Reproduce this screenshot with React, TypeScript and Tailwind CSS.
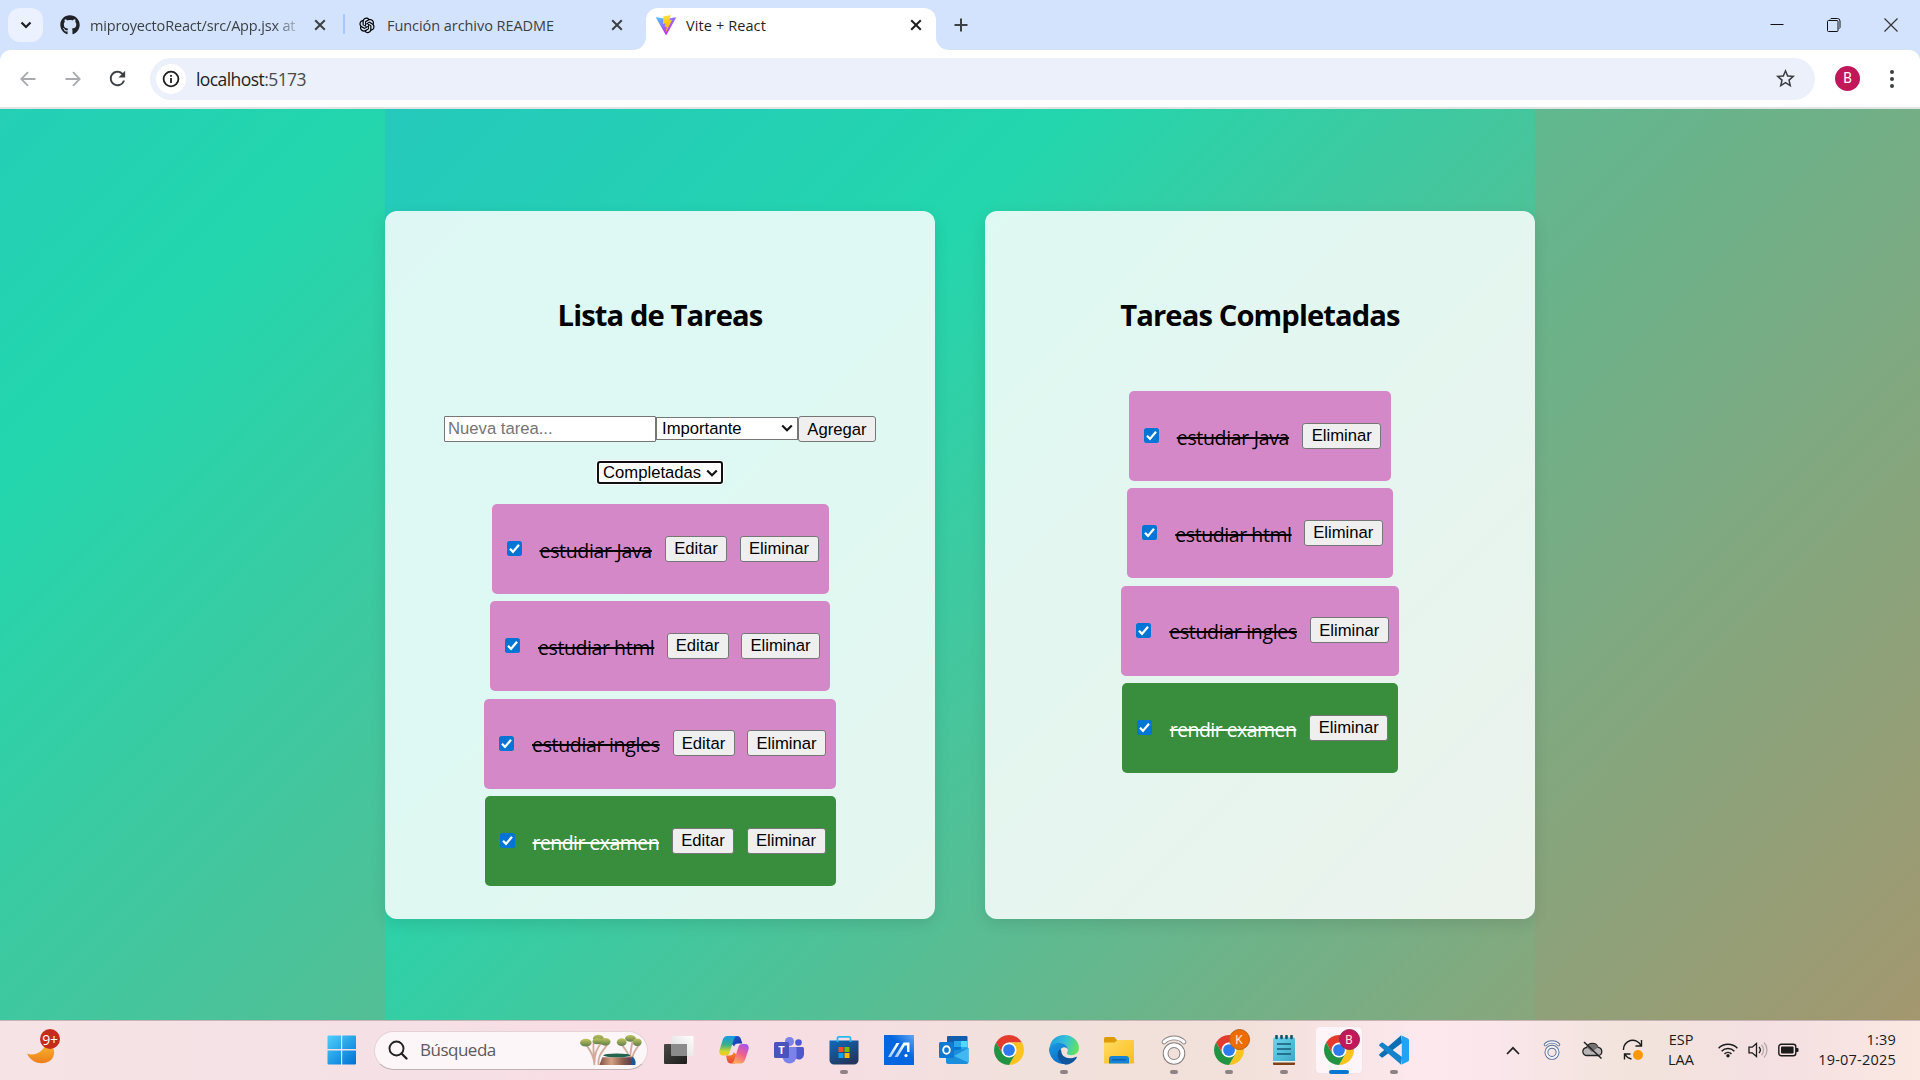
import React from "react";
import { FaGithub } from "react-icons/fa";
import { AiOutlineOpenAI } from "react-icons/ai";
import { MdStarOutline, MdRefresh } from "react-icons/md";

type Kind = "pink" | "green";
interface Task {
  name: string;
  kind: Kind;
  width: string;
}

const tasks: Task[] = [
  { name: "estudiar Java", kind: "pink", width: "w-[113px] tracking-[-0.32px]" },
  { name: "estudiar html", kind: "pink", width: "w-[116px] tracking-[-0.42px]" },
  { name: "estudiar ingles", kind: "pink", width: "w-[128px] tracking-[-0.32px]" },
  { name: "rendir examen", kind: "green", width: "w-[127px] tracking-[-0.55px]" },
];

const CloseIcon = ({ dark = false }: { dark?: boolean }) => (
  <svg width="12" height="12" viewBox="0 0 12 12" className="shrink-0">
    <path d="M1.2 1.2 10.8 10.8M10.8 1.2 1.2 10.8" stroke={dark ? "#1f1f1f" : "#3c4043"} strokeWidth="2" />
  </svg>
);

const ViteLogo = () => (
  <svg width="20" height="20" viewBox="0 0 256 257">
    <defs>
      <linearGradient id="v1" x1="0" y1="0" x2="0.6" y2="0.8">
        <stop offset="0" stopColor="#41D1FF" />
        <stop offset="1" stopColor="#BD34FE" />
      </linearGradient>
      <linearGradient id="v2" x1="0.4" y1="0" x2="0.5" y2="1">
        <stop offset="0" stopColor="#FFEA83" />
        <stop offset=".1" stopColor="#FFDD35" />
        <stop offset="1" stopColor="#FFA800" />
      </linearGradient>
    </defs>
    <path fill="url(#v1)" d="M255.153 37.938L134.897 252.976c-2.483 4.44-8.862 4.466-11.382.048L.875 37.958c-2.746-4.814 1.371-10.646 6.827-9.67l120.385 21.517a6.537 6.537 0 0 0 2.322-.004l117.867-21.483c5.438-.991 9.574 4.796 6.877 9.62Z" />
    <path fill="url(#v2)" d="M185.432.063L96.44 17.501a3.268 3.268 0 0 0-2.634 3.014l-5.474 92.456a3.268 3.268 0 0 0 3.997 3.378l24.777-5.718c2.318-.535 4.413 1.507 3.936 3.838l-7.361 36.047c-.495 2.426 1.782 4.5 4.151 3.78l15.304-4.649c2.372-.72 4.652 1.36 4.15 3.788l-11.698 56.621c-.732 3.542 3.979 5.473 5.943 2.437l1.313-2.028l72.516-144.72c1.215-2.423-.88-5.186-3.54-4.672l-25.505 4.922c-2.396.462-4.435-1.77-3.759-4.114l16.646-57.705c.677-2.35-1.37-4.583-3.769-4.113Z" />
  </svg>
);

function BrowserTabs() {
  return (
    <div className="flex h-[50px] items-start bg-[#d3e3fd] pl-2 pt-2 font-['Open_Sans','Noto_Sans',sans-serif] text-[14.5px] text-[#3c4043]">
      <div className="flex h-[34px] w-[35px] items-center justify-center rounded-xl bg-[#ebf1fe]">
        <svg width="12" height="8" viewBox="0 0 12 8">
          <path d="M1.5 1.5 6 6 10.5 1.5" fill="none" stroke="#1f1f1f" strokeWidth="2.2" />
        </svg>
      </div>
      <div className="ml-[17px] flex h-[34px] w-[266px] items-center">
        <FaGithub size={20} color="#1f2328" />
        <span className="ml-[10px] mt-px w-[210px] overflow-hidden whitespace-nowrap tracking-[-0.17px] [mask-image:linear-gradient(to_right,black_184px,transparent_214px)]">
          miproyectoReact/src/App.jsx at
        </span>
        <span className="ml-[14px] flex"><CloseIcon /></span>
      </div>
      <div className="ml-[17px] mt-[6px] h-5 w-[2px] bg-[#a8c7fa]" />
      <div className="ml-[12px] flex h-[34px] w-[289px] items-center">
        <AiOutlineOpenAI size={20} color="#000" />
        <span className="ml-[10px] mt-px w-[224px] whitespace-nowrap tracking-[-0.06px]">Función archivo README</span>
        <CloseIcon />
      </div>
      <svg width="13" height="42" viewBox="0 0 13 42" className="-ml-[13px]">
        <path d="M0 42 A13 13 0 0 0 13 29 V42Z" fill="#fff" />
      </svg>
      <div className="flex h-[42px] w-[290px] items-start rounded-t-[12px] bg-white pl-[10px] text-[#1f1f1f]">
        <div className="flex h-[34px] w-full items-center">
          <ViteLogo />
          <span className="ml-[10px] mt-px w-[224px] tracking-[0.1px]">Vite + React</span>
          <CloseIcon dark />
        </div>
      </div>
      <svg width="13" height="42" viewBox="0 0 13 42">
        <path d="M13 42 A13 13 0 0 1 0 29 V42Z" fill="#fff" />
      </svg>
      <svg width="14" height="34" viewBox="0 0 14 34" className="ml-[5px]">
        <path d="M7 10.5V23.5M.5 17H13.5" stroke="#3c4043" strokeWidth="2" />
      </svg>
      <div className="ml-auto mr-[22px] flex h-[34px] items-center gap-[43px]">
        <svg width="14" height="14" viewBox="0 0 14 14"><path d="M.5 6.5H13.500" stroke="#111" /></svg>
        <svg width="14" height="14" viewBox="0 0 14 14" fill="none" stroke="#111">
          <path d="M.5 3.500a1 1 0 0 1 1-1h8.500a1 1 0 0 1 1 1v9a1 1 0 0 1-1 1H1.500a1 1 0 0 1-1-1z" />
          <path d="M3 1.500 4 .5h6.500a2.500 2.500 0 0 1 2.500 2.500v6.500l-1 1.200" />
        </svg>
        <svg width="14" height="14" viewBox="0 0 14 14"><path d="M.5.5 13.500 13.500M13.500.5.5 13.500" stroke="#333" strokeWidth="1.200" /></svg>
      </div>
    </div>
  );
}

function AddressBar() {
  return (
    <div className="h-[59px] bg-[#d3e3fd] font-['Open_Sans','Noto_Sans',sans-serif]">
      <div className="flex h-[59px] items-center rounded-t-[11px] border-b-2 border-[#dfe3e1] bg-white">
        <svg width="16" height="16" viewBox="0 0 16 16" className="ml-5" fill="none" stroke="#a9abae" strokeWidth="1.800">
          <path d="M15.500 8H1.500M8 1.200 1.300 8 8 14.800" />
        </svg>
        <svg width="16" height="16" viewBox="0 0 16 16" className="ml-[29px]" fill="none" stroke="#a9abae" strokeWidth="1.800">
          <path d="M.5 8H14.500M8 1.200 14.700 8 8 14.800" />
        </svg>
        <MdRefresh size={23} color="#3c4043" className="ml-[25px]" />
        <div className="ml-[21px] flex h-[42px] w-[1665px] items-center rounded-full bg-[#ecf0fa] pl-[6px] pr-[18px]">
          <div className="flex h-[30px] w-[30px] items-center justify-center rounded-full bg-white">
            <svg width="18" height="18" viewBox="0 0 18 18" fill="none" stroke="#1f1f1f">
              <circle cx="9" cy="9" r="7.400" strokeWidth="1.800" />
              <path d="M9 8v5M9 5v1.800" strokeWidth="1.800" />
            </svg>
          </div>
          <span className="ml-[10px] mt-px text-[17.500px] tracking-[-0.570px] text-[#1f1f1f]">
            localhost<span className="text-[#474b4f]">:5173</span>
          </span>
          <MdStarOutline size={23} color="#3c4043" className="ml-auto" />
        </div>
        <div className="ml-5 flex h-[25px] w-[25px] items-center justify-center rounded-full bg-[#c2185b] font-['Roboto',sans-serif] text-[14px] text-white">B</div>
        <div className="ml-[30px] flex flex-col gap-[3px]">
          <i className="h-1 w-1 rounded-full bg-[#3c4043]" />
          <i className="h-1 w-1 rounded-full bg-[#3c4043]" />
          <i className="h-1 w-1 rounded-full bg-[#3c4043]" />
        </div>
      </div>
    </div>
  );
}

const FormButton = ({ children, className }: { children: React.ReactNode; className: string }) => (
  <button
    className={
      "h-[26px] shrink-0 rounded-[3px] border border-[#767676] bg-[#efefef] text-center font-['Liberation_Sans',Arial,sans-serif] text-[16.67px] leading-[23px] text-black " +
      className
    }
  >
    {children}
  </button>
);

const SelectArrow = () => (
  <svg width="12" height="8" viewBox="0 0 12 8" className="ml-auto shrink-0">
    <path d="M1.200 1.500 6 6.200 10.800 1.500" fill="none" stroke="#111" strokeWidth="2.100" />
  </svg>
);

function TaskRow({ task, editable }: { task: Task; editable: boolean }) {
  const green = task.kind === "green";
  return (
    <li className={"flex h-[90px] items-center rounded-[5px] pb-px pl-[15px] pr-[10px] " + (green ? "bg-[#388e3c] text-white" : "bg-[#d588c8] text-black")}>
      <svg width="15" height="15" viewBox="0 0 15 15" className="shrink-0">
        <rect width="15" height="15" rx="2.500" fill="#0075d5" />
        <path d="M3 7.800 6 10.900 12 3.800" fill="none" stroke="#fff" strokeWidth="2.300" />
      </svg>
      <span className={"ml-[18px] mr-[12.500px] mt-[3px] shrink-0 whitespace-nowrap font-['Open_Sans','Noto_Sans',sans-serif] text-[19.500px] leading-[27px] line-through decoration-2 " + task.width}>
        {task.name}
      </span>
      {editable && <FormButton className="mr-[12.500px] w-[62px]">Editar</FormButton>}
      <FormButton className="w-[79px]">Eliminar</FormButton>
    </li>
  );
}

const Heading = ({ children }: { children: React.ReactNode }) => (
  <h2 className="whitespace-nowrap font-['Open_Sans','Noto_Sans',sans-serif] text-[29.200px] font-bold leading-10 tracking-[-0.900px] text-black">{children}</h2>
);

const cardClass =
  "flex h-[708px] w-[550px] flex-col items-center rounded-[12px] bg-white/85 pt-[84px] shadow-[0_5px_15px_rgba(0,0,0,0.1)]";

function PageContent() {
  return (
    <main className="flex h-[911px] justify-center bg-[linear-gradient(135deg,#24cfb6_0%,#23d6ad_13.1%,#a3976f_100%)]">
      <div className="flex w-[1150px] gap-[50px] bg-[linear-gradient(135deg,#25c9bc_0%,#23d6ad_33.3%,#89a67c_100%)] pt-[102px]">
        <section className={cardClass}>
          <Heading>Lista de Tareas</Heading>
          <div className="mt-[81px] flex items-center font-['Liberation_Sans',Arial,sans-serif] text-[16.670px] leading-[21px]">
            <input
              placeholder="Nueva tarea..."
              className="h-[26px] w-[212px] rounded-[1px] border border-[#767676] bg-white px-[3px] pb-px text-[16.670px] placeholder:text-[#757575]"
            />
            <div className="mb-[2px] flex h-[23px] w-[142px] items-center border border-[#767676] bg-white pl-[5px] pr-1">
              Importante
              <SelectArrow />
            </div>
            <FormButton className="w-[78px]">Agregar</FormButton>
          </div>
          <div className="mt-[19px] flex h-[23px] w-[126px] items-center rounded-[3px] border-2 border-[#101010] bg-white pl-1 pr-[3px] font-['Liberation_Sans',Arial,sans-serif] text-[16.670px] shadow-[0_0_0_1px_#fff]">
            Completadas
            <SelectArrow />
          </div>
          <ul className="mt-5 flex flex-col items-center gap-[7.400px]">
            {tasks.map((t) => <TaskRow key={t.name} task={t} editable />)}
          </ul>
        </section>
        <section className={cardClass}>
          <Heading>Tareas Completadas</Heading>
          <ul className="mt-14 flex flex-col items-center gap-[7.400px]">
            {tasks.map((t) => <TaskRow key={t.name} task={t} editable={false} />)}
          </ul>
        </section>
      </div>
    </main>
  );
}

const TaskViewIcon = () => (
  <svg width="30" height="30" viewBox="0 0 30 30">
    <defs>
      <linearGradient id="tvd" x1="0" y1="0" x2="1" y2="1"><stop stopColor="#4a4a48" /><stop offset="1" stopColor="#1c1c1a" /></linearGradient>
      <linearGradient id="tvl" x1="0" y1="1" x2="1" y2="0"><stop stopColor="#d8d8d8" /><stop offset="1" stopColor="#fff" /></linearGradient>
    </defs>
    <rect x="0" y="9" width="23" height="20" rx="1" fill="url(#tvd)" />
    <rect x="7.500" y="1" width="22" height="20" rx="1" fill="url(#tvl)" />
    <rect x="7.500" y="9" width="15.500" height="12" fill="#8b8b8b" />
  </svg>
);

const CopilotIcon = () => (
  <svg width="30" height="30" viewBox="0 0 30 30">
    <defs>
      <linearGradient id="cp1" x1=".3" y1="0" x2=".3" y2="1"><stop stopColor="#159be8" /><stop offset=".45" stopColor="#38b08a" /><stop offset=".8" stopColor="#d8d62a" /><stop offset="1" stopColor="#f6c51e" /></linearGradient>
      <linearGradient id="cp2" x1=".8" y1="0" x2=".3" y2="1"><stop stopColor="#a653f0" /><stop offset=".5" stopColor="#f0608c" /><stop offset="1" stopColor="#ffae58" /></linearGradient>
      <linearGradient id="cp3" x1="0" y1="0" x2="1" y2="1"><stop stopColor="#1c62d8" /><stop offset="1" stopColor="#182f9e" /></linearGradient>
      <linearGradient id="cp4" x1="0" y1="0" x2="0" y2="1"><stop stopColor="#f7862c" /><stop offset="1" stopColor="#e8453a" /></linearGradient>
    </defs>
    <path d="M14 1h4c2.500 0 3.400 1.500 4 3.500l1.300 4h-4c-2.600 0-3.500 1-4.200 3L12 8z" fill="url(#cp3)" />
    <path d="M16 28.500h-4c-2.500 0-3.400-1.500-4-3.500L7 20.500h3.500c2.500 0 3.600-1 4.300-3.500L18 20.500z" fill="url(#cp4)" />
    <path d="M8.500 1H18c-2 .4-2.800 2-3.500 4.200L10.800 17c-.8 2.500-1.800 3.500-4.300 3.500H4c-3.300 0-4.300-2.500-3.500-5.500l3-9.500C4.300 2.700 5.800 1 8.500 1z" fill="url(#cp1)" />
    <path d="M21.500 28.500H12c2-.4 2.800-2 3.500-4.200L19.200 12.500c.8-2.500 1.800-3.500 4.300-3.500H26c3.300 0 4.300 2.500 3.500 5.500l-3 9c-.8 3-2.300 5-5 5z" fill="url(#cp2)" />
  </svg>
);

const TeamsIcon = () => (
  <svg width="30" height="30" viewBox="0 0 30 30">
    <circle cx="24.500" cy="7.500" r="3.300" fill="#5059c9" />
    <circle cx="15.500" cy="6.500" r="4.500" fill="#7b83eb" />
    <path d="M20 12h8.500a1.500 1.500 0 0 1 1.500 1.500v6a5 5 0 0 1-8 4z" fill="#5059c9" />
    <path d="M9 12h12.500a1 1 0 0 1 1 1v8.500a6.800 6.800 0 0 1-14 0z" fill="#7b83eb" />
    <rect x="0" y="7" width="15" height="16" rx="1.500" fill="#4b53bc" />
    <text x="7.500" y="19" textAnchor="middle" fontSize="11" fontWeight="700" fill="#fff" fontFamily="Open Sans">T</text>
  </svg>
);

const StoreIcon = () => (
  <svg width="30" height="30" viewBox="0 0 30 30">
    <defs><linearGradient id="st" x1="0" y1="0" x2=".6" y2="1"><stop stopColor="#0e6cbe" /><stop offset="1" stopColor="#22365e" /></linearGradient></defs>
    <path d="M.5 5.500h29V25a4.500 4.500 0 0 1-4.500 4.500H5A4.500 4.500 0 0 1 .5 25z" fill="url(#st)" />
    <path d="M8.500 7V3a1.200 1.200 0 0 1 1.200-1.200h10.600A1.200 1.200 0 0 1 21.500 3v4" fill="none" stroke="#29b9ee" strokeWidth="1.800" />
    <path d="M9.500 12h5v5h-5z" fill="#f25022" /><path d="M15.500 12h5v5h-5z" fill="#7fba00" />
    <path d="M9.500 18h5v5h-5z" fill="#00a4ef" /><path d="M15.500 18h5v5h-5z" fill="#ffb900" />
  </svg>
);

const AsusIcon = () => (
  <svg width="30" height="30" viewBox="0 0 30 30">
    <defs>
      <linearGradient id="as" x1="0" y1="1" x2="1" y2="0"><stop offset=".6" stopColor="#0567e0" /><stop offset="1" stopColor="#62a6f5" /></linearGradient>
      <linearGradient id="as2" x1="1" y1="0" x2="0" y2="1"><stop offset=".2" stopColor="#fff" /><stop offset="1" stopColor="#9cc5f8" /></linearGradient>
    </defs>
    <rect width="30" height="30" fill="url(#as)" />
    <path d="M4 22 12.500 8H15.500L7 22z" fill="url(#as2)" />
    <path d="M10.500 22 19.500 7.500H25.500V17H23V10.500H20.800L13.800 22z" fill="url(#as2)" />
    <circle cx="22" cy="20.500" r="1.600" fill="#fff" />
  </svg>
);

const OutlookIcon = () => (
  <svg width="30" height="30" viewBox="0 0 30 30">
    <rect x="8" y="1" width="20.500" height="20" rx="1" fill="#0f5fae" />
    <path d="M15 6h7v6h-7z" fill="#28a8ea" /><path d="M22 6h6.500v6H22z" fill="#50d9ff" /><path d="M15 12h7v5h-7z" fill="#0078d4" /><path d="M22 12h6.500v5H22z" fill="#28a8ea" />
    <path d="M7 17 29.500 13v14a2 2 0 0 1-2 2H9a2 2 0 0 1-2-2z" fill="#1c8fdc" />
    <path d="M29.500 13v14.500L15 21z" fill="#42b8f0" />
    <rect x="0" y="7" width="15" height="16" rx="1.500" fill="#0f78d0" />
    <ellipse cx="7.500" cy="15" rx="3.300" ry="3.800" fill="none" stroke="#fff" strokeWidth="1.900" />
  </svg>
);

const ChromeIcon = () => (
  <svg width="30" height="30" viewBox="0 0 48 48">
    <path d="M24 12H44.780A24 24 0 0 0 3.220 12L13.600 30z" fill="#e33b2e" />
    <path d="M34.390 30 24 48A24 24 0 0 0 44.780 12H24z" fill="#fcc31e" />
    <path d="M13.610 30 3.220 12A24 24 0 0 0 24 48L34.390 30z" fill="#229342" />
    <circle cx="24" cy="24" r="12" fill="#fff" />
    <circle cx="24" cy="24" r="9.400" fill="#2c7cf0" />
  </svg>
);

const EdgeIcon = () => (
  <svg width="30" height="30" viewBox="0 0 30 30">
    <defs>
      <linearGradient id="eg1" x1="0" y1=".3" x2="1" y2=".6"><stop stopColor="#1f9fdf" /><stop offset=".5" stopColor="#35c1d8" /><stop offset="1" stopColor="#66e25a" /></linearGradient>
      <linearGradient id="eg2" x1="0" y1="0" x2=".6" y2="1"><stop stopColor="#1b9de2" /><stop offset="1" stopColor="#0a6cc9" /></linearGradient>
    </defs>
    <path d="M.5 13C1.500 5 7.500 0 15 0c9 0 15 6.500 15 13 0 4.500-3.500 7.200-7.500 7.200-3.500 0-5-1.200-4.500-2.400.6-1 .9-1.800.9-3C18.900 11 15 8 10 8 5.500 8 2 10 .5 13z" fill="url(#eg1)" />
    <path d="M0 15c.2-4.500 4.500-7.300 9.500-7.300 5.500 0 9.400 3.300 9.400 7-1-2-3-2.700-4.800-2.200-3 .8-4.600 4-3.600 8 1.500 5.500 7 8 10 7.500A15 15 0 0 1 0 15z" fill="url(#eg2)" />
    <path d="M10.800 14.500c-3.800 3.500-3 12 5.700 15.300 4.500 0 9-3 11.200-7 .3-.8-.2-1.200-1-.8-6.700 3-14.500.5-14.500-6.500 0-.8-.8-1.500-1.400-1z" fill="#10549c" />
  </svg>
);

const FolderIcon = () => (
  <svg width="30" height="30" viewBox="0 0 30 30">
    <defs><linearGradient id="fo" x1="0" y1="0" x2="1" y2="1"><stop stopColor="#ffdc62" /><stop offset="1" stopColor="#fcbc20" /></linearGradient></defs>
    <path d="M0 3.500A1.500 1.500 0 0 1 1.500 2h8.700L13 5v5H0z" fill="#dd9b09" />
    <path d="M0 7.500h10.500L13.500 5H29a1 1 0 0 1 1 1v22.500H0z" fill="url(#fo)" />
    <path d="M5 28.500V24a3 3 0 0 1 3-3h14a3 3 0 0 1 3 3v4.500z" fill="#1583d8" />
    <path d="M8 24.800h14" stroke="#0b5ba5" strokeWidth="1.300" />
  </svg>
);

const RingIcon = ({ size, line, fill, thin = 3 }: { size: number; line: string; fill: string; thin?: number }) => (
  <svg width={size} height={size} viewBox="0 0 30 30" fill="none">
    <path d="M5 7C10 1.500 20 1.500 25 7" stroke={line} strokeWidth="4.800" strokeLinecap="round" />
    <path d="M5 7C10 1.500 20 1.500 25 7" stroke={fill} strokeWidth={thin} strokeLinecap="round" />
    <circle cx="15" cy="18.500" r="8.400" stroke={line} strokeWidth="5.800" />
    <circle cx="15" cy="18.500" r="8.400" stroke={fill} strokeWidth={thin + 0.8} />
  </svg>
);

const NotepadIcon = () => (
  <svg width="30" height="30" viewBox="0 0 30 30">
    <defs><linearGradient id="np" x1="0" y1="0" x2="1" y2="1"><stop stopColor="#6ed6ec" /><stop offset="1" stopColor="#3aa9c8" /></linearGradient></defs>
    <rect x="4" y="26" width="22" height="4" rx="1" fill="#7d4018" />
    <rect x="4" y="25" width="22" height="2.500" fill="#f2efe9" />
    <path d="M4 4a1.500 1.500 0 0 1 1.500-1.500h19A1.500 1.500 0 0 1 26 4v22H4z" fill="url(#np)" />
    <path d="M8 9h14M8 14h14M8 19h14" stroke="#145a78" strokeWidth="1.700" />
    <path d="M7.500 1v2M12.500 1v2M17.500 1v2M22.500 1v2" stroke="#125067" strokeWidth="2.600" strokeLinecap="round" />
  </svg>
);

const VsCodeIcon = () => (
  <svg width="30" height="30" viewBox="0 0 30 30">
    <path d="M22.200.3 23 8 4 22.300a1.500 1.500 0 0 1-1.700 0L.6 20.700a1.200 1.200 0 0 1 0-1.800z" fill="#0a6fb5" />
    <path d="M22.200 29.700 23 22 4 7.700a1.500 1.500 0 0 0-1.700 0L.6 9.300a1.200 1.200 0 0 0 0 1.800z" fill="#1583cb" />
    <path d="M22.200.3 29 3.500a1.800 1.800 0 0 1 1 1.600v19.800a1.800 1.800 0 0 1-1 1.600l-6.800 3.200c.6-.4.600-1 .6-1.700V2c0-.7 0-1.300-.6-1.700z" fill="#24a3f0" />
  </svg>
);

interface AppEntry {
  id: string;
  icon: React.ReactNode;
  running?: boolean;
  active?: boolean;
  badge?: { label: string; style: string };
}

const apps: AppEntry[] = [
  { id: "taskview", icon: <TaskViewIcon /> },
  { id: "copilot", icon: <CopilotIcon /> },
  { id: "teams", icon: <TeamsIcon /> },
  { id: "store", icon: <StoreIcon />, running: true },
  { id: "asus", icon: <AsusIcon /> },
  { id: "outlook", icon: <OutlookIcon /> },
  { id: "chrome", icon: <ChromeIcon /> },
  { id: "edge", icon: <EdgeIcon />, running: true },
  { id: "folder", icon: <FolderIcon /> },
  { id: "ring", icon: <RingIcon size={30} line="#85807e" fill="#ffffff" />, running: true },
  { id: "chrome-k", icon: <ChromeIcon />, running: true, badge: { label: "K", style: "bg-[#ef6c00] border-[#b5601d]" } },
  { id: "notepad", icon: <NotepadIcon />, running: true },
  { id: "chrome-b", icon: <ChromeIcon />, active: true, badge: { label: "B", style: "bg-[#c2185b] border-[#93254f]" } },
  { id: "vscode", icon: <VsCodeIcon />, running: true },
];

function SearchArt() {
  return (
    <svg width="65" height="32" viewBox="0 0 65 33" className="ml-auto">
      <defs>
        <linearGradient id="trunk"><stop stopColor="#805044" /><stop offset=".35" stopColor="#d4a283" /><stop offset=".7" stopColor="#8a5a4c" /><stop offset="1" stopColor="#54384a" /></linearGradient>
        <linearGradient id="leaf" x1="0" y1="0" x2="0" y2="1"><stop stopColor="#c2c45c" /><stop offset="1" stopColor="#5f7f4c" /></linearGradient>
      </defs>
      <g fill="none" stroke="#d3aa9c" strokeWidth="1.900">
        <path d="M15 32C14 23 12 19 7 12M15 30C15 20 17 15 23 8M19 32C18 22 24 17 29 10M15 24C13 17 14 12 14 9" />
        <path d="M50 27C51 20 47 16 43 11M52 30C51 21 53 15 54 8M54 30C53 21 57 17 61 11" />
      </g>
      <path d="M23 24H53L55 32H20z" fill="url(#trunk)" />
      <path d="M53 23c4 2 5 6 4 9h-4z" fill="#17599c" />
      <ellipse cx="38" cy="22" rx="14" ry="2" fill="#23644f" />
      <g fill="url(#leaf)">
        <ellipse cx="6" cy="9" rx="6" ry="4" /><ellipse cx="19" cy="4.500" rx="5.500" ry="3.800" /><ellipse cx="26" cy="8" rx="5.500" ry="4" /><ellipse cx="18" cy="7.500" rx="5" ry="3" />
        <ellipse cx="43" cy="8.500" rx="5" ry="4" /><ellipse cx="52" cy="4.500" rx="5.500" ry="3.400" /><ellipse cx="59" cy="8.500" rx="4.500" ry="3.800" />
      </g>
    </svg>
  );
}

function Tray() {
  return (
    <div className="ml-auto flex h-full items-center pr-6 font-['Open_Sans','Noto_Sans',sans-serif] text-[14.500px] leading-5 text-[#1b1b1b]">
      <svg width="14" height="9" viewBox="0 0 14 9"><path d="M1 8 7 1.800 13 8" fill="none" stroke="#222" strokeWidth="1.700" /></svg>
      <span className="ml-[22px]"><RingIcon size={20} line="#53709b" fill="#f7f3f5" thin={2.2} /></span>
      <svg width="22" height="18" viewBox="0 0 22 18" className="ml-5">
        <path d="M5 14.500a4 4 0 0 1-.3-8A6 6 0 0 1 16 6.300a4.200 4.200 0 0 1 .8 8.200z" fill="#b9b4b5" stroke="#222" strokeWidth="1.300" />
        <path d="M5 6.500A6 6 0 0 1 16 6.300L10 11z" fill="#747070" />
        <path d="M2 1 19.500 17.500" stroke="#222" strokeWidth="1.500" />
      </svg>
      <svg width="22" height="22" viewBox="0 0 22 22" className="ml-[18px]" fill="none" stroke="#1b1b1b" strokeWidth="1.400">
        <path d="M1.500 11A9.200 9.200 0 0 1 19 6.500M19.500 1v6h-6M9.500 20A9.500 9.500 0 0 1 3 15.500M2.500 20.500v-5.500h6" />
        <circle cx="16" cy="16" r="5" fill="#ff9800" stroke="none" />
      </svg>
      <div className="ml-[22px] w-[30px] text-center">ESP<br />LAA</div>
      <svg width="20" height="16" viewBox="0 0 20 16" className="ml-[22px]" fill="none" stroke="#1b1b1b" strokeWidth="1.500">
        <path d="M.6 6.200a13.300 13.300 0 0 1 18.800 0M3.600 9.200a9 9 0 0 1 12.800 0M6.500 12a5 5 0 0 1 7 0" />
        <circle cx="10" cy="13.800" r="1.700" fill="#1b1b1b" stroke="none" />
      </svg>
      <svg width="20" height="18" viewBox="0 0 20 18" className="ml-[10px]" fill="none" stroke="#1b1b1b" strokeWidth="1.300">
        <path d="M1 6.200h3.200L8.500 2.500v13L4.200 11.800H1z" />
        <path d="M11 6a4.500 4.500 0 0 1 0 6" />
        <path d="M13.500 3.700a8 8 0 0 1 0 10.600M16 1.500a11 11 0 0 1 0 15" stroke="#b5aaab" />
      </svg>
      <svg width="21" height="14" viewBox="0 0 21 14" className="ml-[10px]">
        <rect x=".8" y="1.300" width="17" height="11.400" rx="2.500" fill="none" stroke="#1b1b1b" strokeWidth="1.400" />
        <rect x="3" y="3.500" width="12.600" height="7" rx="1" fill="#1b1b1b" />
        <path d="M18 5h1.500a1 1 0 0 1 1 1v2a1 1 0 0 1-1 1H18z" fill="#1b1b1b" />
      </svg>
      <div className="ml-[13px] w-[84px] whitespace-nowrap text-right tracking-[0.220px]">1:39<br />19-07-2025</div>
    </div>
  );
}

function Taskbar() {
  return (
    <footer className="flex h-[60px] items-center border-t border-[#c7b3b6] bg-[linear-gradient(to_right,#f5e3e6_0%,#f5e1e5_22%,#f8dde4_30%,#f6dee3_43%,#f1e1dc_53%,#f2e0da_65%,#fde8ee_74%,#fae6eb_78%,#f2e4dc_85%,#f4dfe2_92%,#fbe8e2_100%)] pb-px">
      <div className="relative ml-[27px] h-[60px] w-[40px] shrink-0">
        <svg width="28" height="26" viewBox="0 0 28 26" className="mt-[19px]">
          <defs><linearGradient id="moon" x1="0" y1="0" x2="0" y2="1"><stop stopColor="#f7c12c" /><stop offset="1" stopColor="#ee7d1c" /></linearGradient></defs>
          <path d="M0 14.500C8 17.500 17 13 20 2c6 4 8.500 9.500 6.500 15C24 26 6 28 0 14.500z" fill="url(#moon)" />
        </svg>
        <div className="absolute left-[13px] top-[9px] flex h-5 w-5 items-center justify-center rounded-full bg-[#c42b1c] font-['Open_Sans',sans-serif] text-[14px] tracking-tight text-white">9+</div>
      </div>
      <svg width="30" height="30" viewBox="0 0 30 30" className="ml-[260px] shrink-0">
        <defs><linearGradient id="win" gradientUnits="userSpaceOnUse" x1="0" y1="0" x2="26" y2="30"><stop stopColor="#4fd2fc" /><stop offset="1" stopColor="#0074d6" /></linearGradient></defs>
        <path d="M1.500.5H14V14H.5V1.500a1 1 0 0 1 1-1zM15.200.5H28a1 1 0 0 1 1 1V14H15.200zM.5 15.500H14V29.500H1.500a1 1 0 0 1-1-1zM15.200 15.500H29v13a1 1 0 0 1-1 1H15.200z" fill="url(#win)" />
      </svg>
      <div className="ml-[17px] flex h-[39px] w-[274px] shrink-0 items-center rounded-full border border-[#e6d3d7] border-b-[#bfb0b3] bg-[#fcf6f8] pl-[13px] pr-[3px]">
        <svg width="20" height="20" viewBox="0 0 20 20" fill="none" stroke="#222">
          <circle cx="8.500" cy="8.500" r="7" strokeWidth="1.900" />
          <path d="M13.500 13.500 18.500 18.500" strokeWidth="2.300" strokeLinecap="round" />
        </svg>
        <span className="ml-[12px] font-['Open_Sans','Noto_Sans',sans-serif] text-[17px] tracking-[-0.500px] text-[#5f595c]">Búsqueda</span>
        <SearchArt />
      </div>
      <div className="ml-[3px] flex shrink-0">
        {apps.map((a) => (
          <div key={a.id} className="flex w-[55px] justify-center">
            <div className={"relative flex h-12 w-12 items-center justify-center rounded-[5px] border " + (a.active ? "border-[#f3e2e6] bg-[#fdf5f7]" : "border-transparent")}>
              {a.icon}
              {a.badge && (
                <div className={"absolute right-[2px] top-[2px] flex h-[21px] w-[21px] items-center justify-center rounded-full border font-['Roboto',sans-serif] text-[12px] text-[#ffe3d0] " + a.badge.style}>
                  {a.badge.label}
                </div>
              )}
              {a.running && <i className="absolute -bottom-px h-1 w-2 rounded-full bg-[#8f8285]" />}
              {a.active && <i className="absolute -bottom-px h-1 w-5 rounded-full bg-[#0078d4]" />}
            </div>
          </div>
        ))}
      </div>
      <Tray />
    </footer>
  );
}

export default function App() {
  return (
    <div className="h-[1080px] w-[1920px] overflow-hidden">
      <BrowserTabs />
      <AddressBar />
      <PageContent />
      <Taskbar />
    </div>
  );
}
